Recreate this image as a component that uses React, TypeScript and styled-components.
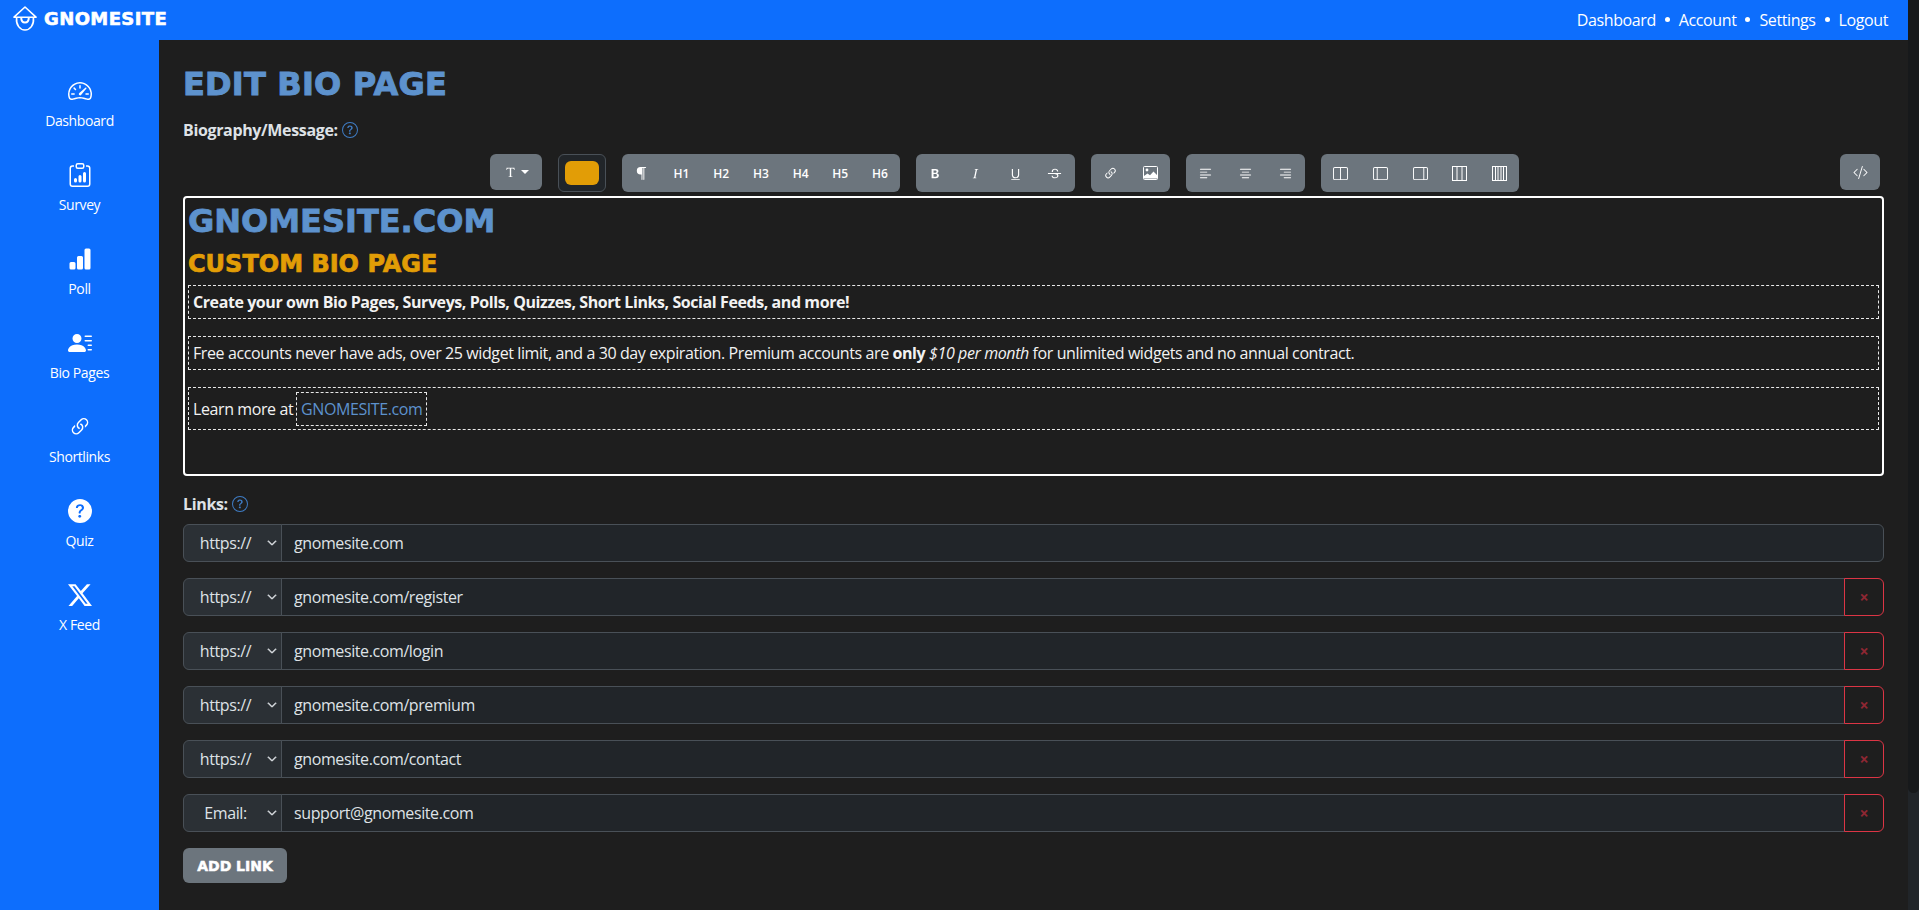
import React from 'react';
import styled, { createGlobalStyle } from 'styled-components';
import {
  BsBarChartFill,
  BsClipboardData,
  BsChevronDown,
  BsCodeSlash,
  BsFonts,
  BsLayoutSidebar,
  BsLayoutSidebarReverse,
  BsLayoutSplit,
  BsLink45Deg,
  BsParagraph,
  BsPersonLinesFill,
  BsQuestionCircle,
  BsQuestionCircleFill,
  BsSpeedometer2,
  BsTextCenter,
  BsTextLeft,
  BsTextRight,
  BsTwitterX,
  BsTypeBold,
  BsTypeItalic,
  BsTypeStrikethrough,
  BsTypeUnderline,
} from 'react-icons/bs';

const C = {
  blue: '#0d6efd',
  page: '#1e1e1e',
  steel: '#5d92cd',
  orange: '#e29d06',
  gray: '#6c757d',
  field: '#212529',
  select: '#2b3035',
  line: '#495057',
  text: '#dee2e6',
  red: '#dc3545',
};

const bodyFont = `'Open Sans', 'Noto Sans', sans-serif`;
const heavyFont = `'DejaVu Sans', 'Liberation Sans', sans-serif`;

const GlobalStyle = createGlobalStyle`
  * { box-sizing: border-box; }
  html, body { margin: 0; height: 100%; overflow: hidden; background: ${C.page}; }
  body { font-family: ${bodyFont}; font-size: 16px; letter-spacing: -0.4px; color: ${C.text}; }
`;

const Shell = styled.div`
  display: flex;
  height: 100vh;
`;

const Page = styled.div`
  flex: 1;
  min-width: 0;
  display: flex;
  flex-direction: column;
`;

// ─── Top bar ──────────────────────────────────────────────────────────────────
const TopBar = styled.header`
  height: 40px;
  flex-shrink: 0;
  display: flex;
  align-items: center;
  justify-content: space-between;
  padding: 0 20px 0 13px;
  background: ${C.blue};
  color: #fff;
`;

const Brand = styled.a`
  display: flex;
  align-items: center;
  gap: 7px;
  font-family: ${heavyFont};
  font-size: 18px;
  font-weight: 700;
  letter-spacing: 0.4px;
  -webkit-text-stroke: 0.6px #fff;
  margin-top: -3px;
`;

const TopNav = styled.nav`
  display: flex;
  align-items: center;
  gap: 9px;
  font-size: 16px;
  margin-top: -1px;
`;

const Dot = styled.span`
  width: 5px;
  height: 5px;
  border-radius: 50%;
  background: #fff;
`;

// ─── Sidebar ──────────────────────────────────────────────────────────────────
const Body = styled.div`
  flex: 1;
  min-height: 0;
  display: flex;
`;

const Sidebar = styled.aside`
  width: 159px;
  flex-shrink: 0;
  display: flex;
  flex-direction: column;
  padding-top: 27px;
  background: ${C.blue};
  color: #fff;
`;

const SideItem = styled.a`
  height: 84px;
  padding-top: 12px;
  display: flex;
  flex-direction: column;
  align-items: center;
  gap: 7px;
  font-size: 14px;
  line-height: 21px;
  svg { font-size: 24px; display: block; }
`;

// ─── Main ─────────────────────────────────────────────────────────────────────
const Main = styled.main`
  flex: 1;
  min-width: 0;
  padding: 25px 24px 0 24px;
  background: ${C.page};
`;

const Title = styled.h1`
  margin: 0 0 15px;
  font-family: ${heavyFont};
  font-size: 32px;
  line-height: 38px;
  font-weight: 700;
  letter-spacing: 0.2px;
  color: ${C.steel};
  -webkit-text-stroke: 1px ${C.steel};
`;

const FieldLabel = styled.div`
  display: flex;
  align-items: center;
  gap: 4px;
  height: 24px;
  font-weight: 700;
  font-size: 16px;
  letter-spacing: -0.35px;
  color: ${C.text};
  svg { font-size: 16px; color: #3f7cc4; }
`;

// ─── Toolbar ──────────────────────────────────────────────────────────────────
const Toolbar = styled.div`
  display: flex;
  align-items: flex-start;
  gap: 16px;
  margin: 12px 4px 4px 307px;
  height: 38px;
`;

const Group = styled.div`
  display: flex;
  height: 38px;
  border-radius: 6px;
  background: ${C.gray};
`;

const ToolBtn = styled.button`
  width: 39.7px;
  height: 38px;
  padding: 0;
  border: 0;
  background: transparent;
  color: #fff;
  display: flex;
  align-items: center;
  justify-content: center;
  font-family: ${bodyFont};
  font-size: 12px;
  font-weight: 600;
  letter-spacing: 0;
  svg { font-size: 15px; }
`;

const DropBtn = styled.button`
  width: 52px;
  height: 36px;
  padding: 0;
  border: 0;
  border-radius: 6px;
  background: ${C.gray};
  color: #fff;
  display: flex;
  align-items: center;
  justify-content: center;
  gap: 3px;
  svg { font-size: 15px; }
`;

const Caret = styled.span`
  width: 0;
  height: 0;
  border-left: 4px solid transparent;
  border-right: 4px solid transparent;
  border-top: 4px solid #fff;
`;

const Swatch = styled.div`
  width: 48px;
  height: 38px;
  padding: 6px;
  border: 1px solid ${C.line};
  border-radius: 6px;
  background: ${C.field};
`;

const SwatchFill = styled.div<{ $color: string }>`
  height: 100%;
  border-radius: 6px;
  background: ${p => p.$color};
`;

const CodeBtn = styled(DropBtn)`
  width: 40px;
  margin-left: auto;
`;

// ─── Editor ───────────────────────────────────────────────────────────────────
const Editor = styled.div`
  height: 280px;
  margin-bottom: 16px;
  padding: 4px 3px 0;
  border: 2px solid #fff;
  border-radius: 4px;
  background: ${C.page};
`;

const EditorH1 = styled.h2`
  margin: 0 0 10px;
  font-family: ${heavyFont};
  font-size: 32px;
  line-height: 38px;
  font-weight: 700;
  letter-spacing: 0;
  color: ${C.steel};
  -webkit-text-stroke: 0.8px ${C.steel};
`;

const EditorH2 = styled.h3`
  margin: 0 0 6px;
  font-family: ${heavyFont};
  font-size: 24px;
  line-height: 29px;
  font-weight: 700;
  letter-spacing: 0;
  color: ${C.orange};
  -webkit-text-stroke: 0.7px ${C.orange};
`;

const Para = styled.p<{ $bold?: boolean }>`
  margin: 0 0 17px;
  padding: 4px;
  border: 1px dashed #e8e8e8;
  line-height: 24px;
  font-weight: ${p => (p.$bold ? 700 : 400)};
  letter-spacing: ${p => (p.$bold ? '-0.42px' : '-0.4px')};
  color: #f2f2f2;
`;

const LinkPara = styled(Para)`
  padding-bottom: 3px;
`;

const DashedLink = styled.a`
  display: inline-block;
  margin-left: -1px;
  padding: 4px;
  border: 1px dashed #e8e8e8;
  line-height: 24px;
  color: ${C.steel};
`;

// ─── Links ────────────────────────────────────────────────────────────────────
const LinkList = styled.div`
  display: flex;
  flex-direction: column;
  gap: 16px;
  margin: 8px 0 16px;
`;

const LinkRow = styled.div`
  display: flex;
  height: 38px;
`;

const SchemeWrap = styled.div`
  position: relative;
  width: 99px;
  flex-shrink: 0;
  svg {
    position: absolute;
    top: 14px;
    right: 5px;
    font-size: 10px;
    stroke: currentColor;
    stroke-width: 1.6;
    color: ${C.text};
    pointer-events: none;
  }
`;

const Scheme = styled.select`
  width: 100%;
  height: 100%;
  padding: 0 22px 0 8px;
  appearance: none;
  border: 1px solid ${C.line};
  border-radius: 6px 0 0 6px;
  background: ${C.select};
  color: ${C.text};
  font-family: ${bodyFont};
  font-size: 16px;
  letter-spacing: -0.4px;
  text-align: center;
`;

const UrlInput = styled.input<{ $alone?: boolean }>`
  flex: 1;
  min-width: 0;
  height: 100%;
  margin-left: -1px;
  padding: 0 12px;
  border: 1px solid ${C.line};
  border-radius: ${p => (p.$alone ? '0 6px 6px 0' : '0')};
  background: ${C.field};
  color: ${C.text};
  font-family: ${bodyFont};
  font-size: 16px;
  letter-spacing: -0.4px;
`;

const RemoveBtn = styled.button`
  width: 40px;
  height: 100%;
  margin-left: -1px;
  padding: 0;
  border: 1px solid ${C.red};
  border-radius: 0 6px 6px 0;
  background: ${C.page};
  color: #8f2733;
  font-family: ${bodyFont};
  font-size: 16px;
  font-weight: 700;
`;

const AddLink = styled.button`
  width: 104px;
  height: 35px;
  padding: 0;
  border: 0;
  border-radius: 6px;
  background: ${C.gray};
  color: #fff;
  font-family: ${heavyFont};
  font-size: 14px;
  font-weight: 700;
  letter-spacing: 0;
  -webkit-text-stroke: 0.5px #fff;
`;

// ─── Scrollbar ────────────────────────────────────────────────────────────────
const ScrollTrack = styled.div`
  width: 11px;
  flex-shrink: 0;
  background: ${C.field};
`;

const ScrollThumb = styled.div`
  height: 793px;
  border-radius: 0 0 6px 6px;
  background: #17191b;
`;

// ─── Drawings ─────────────────────────────────────────────────────────────────
const GnomeLogo = () => (
  <svg width="24" height="25" viewBox="0 0 24 25" fill="none" stroke="#fff" strokeWidth="1.6" strokeLinejoin="round">
    <path d="M12 1 L23 11.2 L1 11.2 Z" />
    <path d="M3.6 12 C2.8 19 7 24 12 24 C17 24 21.2 19 20.4 12" />
    <path d="M8.2 11.5 C8.2 14.6 9.8 16.6 12 16.6 C14.2 16.6 15.8 14.6 15.8 11.5" strokeWidth="2" />
  </svg>
);

const PictureIcon = () => (
  <svg width="15" height="14" viewBox="0 0 15 14">
    <rect x="0.5" y="0.5" width="14" height="13" rx="1" fill="none" stroke="#fff" />
    <circle cx="4" cy="4" r="1.4" fill="#fff" />
    <path d="M1 12.5 V10 L4.5 7.5 L7 9.2 L10.5 5.5 L14 9 V12.5 Z" fill="#fff" />
  </svg>
);

const ColumnsIcon = ({ lines }: { lines: number[] }) => (
  <svg width="15" height="15" viewBox="0 0 15 15" fill="none" stroke="#fff" strokeWidth="1">
    <rect x="0.5" y="0.5" width="14" height="14" />
    {lines.map(x => (
      <line key={x} x1={x} x2={x} y1="0.5" y2="14.5" />
    ))}
  </svg>
);

const sideItems = [
  { label: 'Dashboard', icon: <BsSpeedometer2 /> },
  { label: 'Survey', icon: <BsClipboardData /> },
  { label: 'Poll', icon: <BsBarChartFill /> },
  { label: 'Bio Pages', icon: <BsPersonLinesFill /> },
  { label: 'Shortlinks', icon: <BsLink45Deg /> },
  { label: 'Quiz', icon: <BsQuestionCircleFill /> },
  { label: 'X Feed', icon: <BsTwitterX /> },
];

const links = [
  { scheme: 'https://', url: 'gnomesite.com' },
  { scheme: 'https://', url: 'gnomesite.com/register' },
  { scheme: 'https://', url: 'gnomesite.com/login' },
  { scheme: 'https://', url: 'gnomesite.com/premium' },
  { scheme: 'https://', url: 'gnomesite.com/contact' },
  { scheme: 'Email:', url: 'support@gnomesite.com' },
];

export default function App() {
  return (
    <>
      <GlobalStyle />
      <Shell>
        <Page>
          <TopBar>
            <Brand>
              <GnomeLogo />
              GNOMESITE
            </Brand>
            <TopNav>
              <span>Dashboard</span>
              <Dot />
              <span>Account</span>
              <Dot />
              <span>Settings</span>
              <Dot />
              <span>Logout</span>
            </TopNav>
          </TopBar>
          <Body>
            <Sidebar>
              {sideItems.map(item => (
                <SideItem key={item.label}>
                  {item.icon}
                  {item.label}
                </SideItem>
              ))}
            </Sidebar>
            <Main>
              <Title>EDIT BIO PAGE</Title>
              <FieldLabel>
                Biography/Message: <BsQuestionCircle />
              </FieldLabel>

              <Toolbar>
                <DropBtn>
                  <BsFonts />
                  <Caret />
                </DropBtn>
                <Swatch>
                  <SwatchFill $color={C.orange} />
                </Swatch>
                <Group>
                  <ToolBtn><BsParagraph /></ToolBtn>
                  {['H1', 'H2', 'H3', 'H4', 'H5', 'H6'].map(h => (
                    <ToolBtn key={h}>{h}</ToolBtn>
                  ))}
                </Group>
                <Group>
                  <ToolBtn><BsTypeBold /></ToolBtn>
                  <ToolBtn><BsTypeItalic /></ToolBtn>
                  <ToolBtn><BsTypeUnderline /></ToolBtn>
                  <ToolBtn><BsTypeStrikethrough /></ToolBtn>
                </Group>
                <Group>
                  <ToolBtn><BsLink45Deg /></ToolBtn>
                  <ToolBtn><PictureIcon /></ToolBtn>
                </Group>
                <Group>
                  <ToolBtn><BsTextLeft /></ToolBtn>
                  <ToolBtn><BsTextCenter /></ToolBtn>
                  <ToolBtn><BsTextRight /></ToolBtn>
                </Group>
                <Group>
                  <ToolBtn><BsLayoutSplit /></ToolBtn>
                  <ToolBtn><BsLayoutSidebar /></ToolBtn>
                  <ToolBtn><BsLayoutSidebarReverse /></ToolBtn>
                  <ToolBtn><ColumnsIcon lines={[5, 10]} /></ToolBtn>
                  <ToolBtn><ColumnsIcon lines={[3.5, 6, 9, 11.5]} /></ToolBtn>
                </Group>
                <CodeBtn><BsCodeSlash /></CodeBtn>
              </Toolbar>

              <Editor>
                <EditorH1>GNOMESITE.COM</EditorH1>
                <EditorH2>CUSTOM BIO PAGE</EditorH2>
                <Para $bold>
                  Create your own Bio Pages, Surveys, Polls, Quizzes, Short Links, Social Feeds, and more!
                </Para>
                <Para>
                  Free accounts never have ads, over 25 widget limit, and a 30 day expiration. Premium accounts are{' '}
                  <b>only</b> <i>$10 per month</i> for unlimited widgets and no annual contract.
                </Para>
                <LinkPara>
                  Learn more at <DashedLink>GNOMESITE.com</DashedLink>
                </LinkPara>
              </Editor>

              <FieldLabel>
                Links: <BsQuestionCircle />
              </FieldLabel>
              <LinkList>
                {links.map((link, i) => (
                  <LinkRow key={link.url}>
                    <SchemeWrap>
                      <Scheme defaultValue={link.scheme}>
                        <option>https://</option>
                        <option>Email:</option>
                      </Scheme>
                      <BsChevronDown />
                    </SchemeWrap>
                    <UrlInput readOnly value={link.url} $alone={i === 0} />
                    {i > 0 && <RemoveBtn>×</RemoveBtn>}
                  </LinkRow>
                ))}
              </LinkList>
              <AddLink>ADD LINK</AddLink>
            </Main>
          </Body>
        </Page>
        <ScrollTrack>
          <ScrollThumb />
        </ScrollTrack>
      </Shell>
    </>
  );
}
